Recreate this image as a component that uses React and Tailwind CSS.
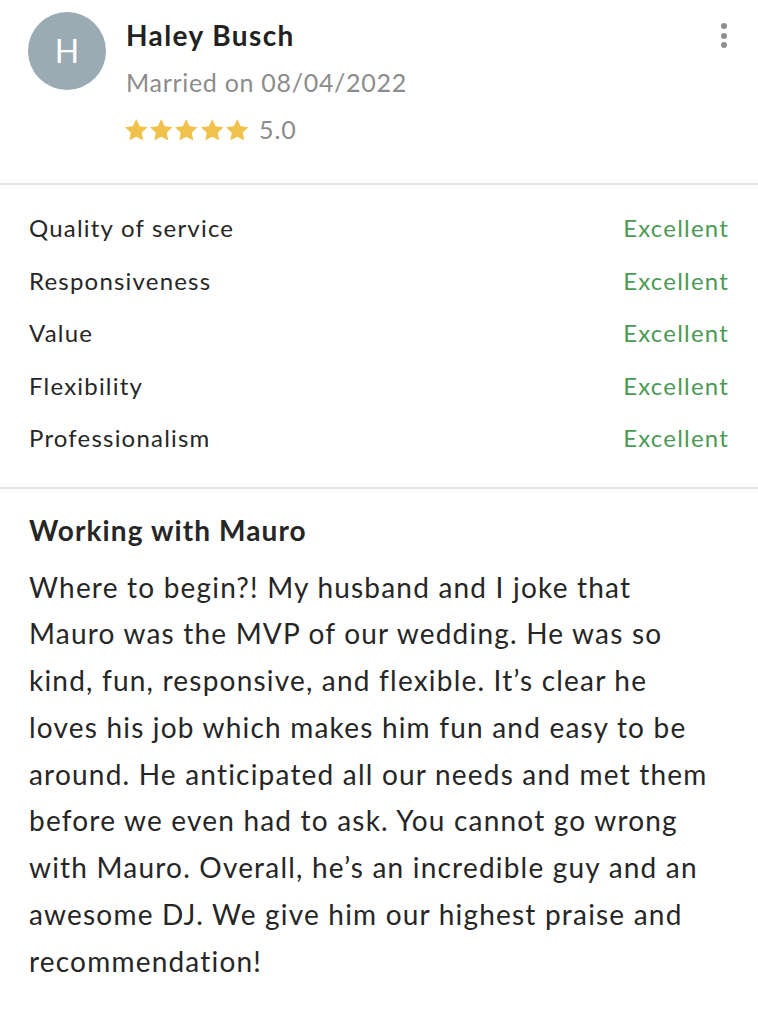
const ratings = ['Quality of service', 'Responsiveness', 'Value', 'Flexibility', 'Professionalism']

const lines = [
  'Where to begin?! My husband and I joke that',
  'Mauro was the MVP of our wedding. He was so',
  'kind, fun, responsive, and flexible. It’s clear he',
  'loves his job which makes him fun and easy to be',
  'around. He anticipated all our needs and met them',
  'before we even had to ask. You cannot go wrong',
  'with Mauro. Overall, he’s an incredible guy and an',
  'awesome DJ. We give him our highest praise and',
  'recommendation!',
]

function Star() {
  return (
    <svg width="22.5" height="21.5" viewBox="1.7 1.8 20.6 19.6">
      <path d="M12 1.8l3.1 6.6 7.2.9-5.3 5 1.4 7.1L12 17.9l-6.4 3.5L7 14.3l-5.3-5 7.2-.9z" fill="#f0c14b" />
    </svg>
  )
}

export default function App() {
  return (
    <div className="w-[758px] min-h-[1023px] bg-white text-[#262626] font-['Lato',sans-serif]">
      <div className="flex items-start pl-7 pr-7 pt-3 pb-[41px]">
        <div className="w-[78px] h-[78px] rounded-full bg-[#9aabb4] flex items-center justify-center text-white text-[32px] shrink-0">H</div>
        <div className="ml-5 flex-1">
          <div className="text-[28px] font-bold tracking-[1.4px] leading-[34px] mt-[6px] text-[#222]">Haley Busch</div>
          <div className="text-[25px] tracking-[0.7px] leading-[34px] mt-[13px] text-[#8c8c8c]">Married on 08/04/2022</div>
          <div className="flex items-center gap-[2.7px] mt-[18px] -ml-[1px]">
            {[0, 1, 2, 3, 4].map((i) => <Star key={i} />)}
            <span className="ml-[8px] text-[25px] tracking-[1px] leading-none text-[#8c8c8c]">5.0</span>
          </div>
        </div>
        <div className="flex flex-col gap-[3.5px] mt-[11px] mr-[3px]">
          <span className="w-[6px] h-[6px] rounded-full bg-[#8e8e8e]" />
          <span className="w-[6px] h-[6px] rounded-full bg-[#8e8e8e]" />
          <span className="w-[6px] h-[6px] rounded-full bg-[#8e8e8e]" />
        </div>
      </div>

      <div className="h-[2px] bg-[#e3e3e3]" />

      <div className="px-[29px] pt-[17px] pb-[22px] flex flex-col">
        {ratings.map((r) => (
          <div key={r} className="flex justify-between items-center h-[52.5px] text-[24px] tracking-[1.2px]">
            <span>{r}</span>
            <span className="text-[#4c9a55]">Excellent</span>
          </div>
        ))}
      </div>

      <div className="h-[2px] bg-[#e3e3e3]" />

      <div className="px-[29px] pt-[22px]">
        <div className="text-[28px] font-bold tracking-[1.1px] leading-[38px]">Working with Mauro</div>
        <div className="mt-[15px] text-[28px] tracking-[1.2px] leading-[46.8px]">
          {lines.map((l) => (
            <div key={l} className="whitespace-nowrap">{l}</div>
          ))}
        </div>
      </div>
    </div>
  )
}
